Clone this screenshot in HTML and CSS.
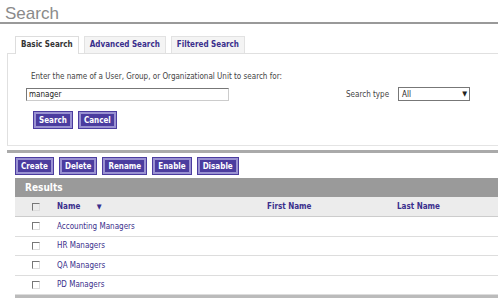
FILE: index.html
```html
<!DOCTYPE html>
<html lang="en">
<head>
    <meta charset="UTF-8">
    <title>Search</title>
    <link rel="stylesheet" href="styles.css">
</head>
<body>
    <div class="page">
        <h1 class="title">Search</h1>
        <div class="tabs">
            <div class="tab active">Basic Search</div>
            <div class="tab">Advanced Search</div>
            <div class="tab">Filtered Search</div>
        </div>
        <div class="panel">
            <div class="hint">Enter the name of a User, Group, or Organizational Unit to search for:</div>
            <div class="row">
                <input class="query" type="text" value="manager">
                <label class="type-label">Search type</label>
                <div class="select"><span>All</span><span class="arrow">&#9660;</span></div>
            </div>
            <div class="actions">
                <button class="btn">Search</button>
                <button class="btn">Cancel</button>
            </div>
        </div>
        <div class="divider"></div>
        <div class="toolbar">
            <button class="btn">Create</button>
            <button class="btn">Delete</button>
            <button class="btn">Rename</button>
            <button class="btn">Enable</button>
            <button class="btn">Disable</button>
        </div>
        <div class="results">
            <div class="results-bar">Results</div>
            <table class="grid">
                <tr class="head">
                    <td class="check"><span class="box"></span></td>
                    <td class="name">Name <span class="sort">&#9660;</span></td>
                    <td class="first">First Name</td>
                    <td class="last">Last Name</td>
                </tr>
                <tr>
                    <td class="check"><span class="box"></span></td>
                    <td class="name">Accounting Managers</td>
                    <td></td>
                    <td></td>
                </tr>
                <tr>
                    <td class="check"><span class="box"></span></td>
                    <td class="name">HR Managers</td>
                    <td></td>
                    <td></td>
                </tr>
                <tr>
                    <td class="check"><span class="box"></span></td>
                    <td class="name">QA Managers</td>
                    <td></td>
                    <td></td>
                </tr>
                <tr>
                    <td class="check"><span class="box"></span></td>
                    <td class="name">PD Managers</td>
                    <td></td>
                    <td></td>
                </tr>
            </table>
        </div>
    </div>
</body>
</html>
```

FILE: styles.css
```css
* {
    margin: 0;
    padding: 0;
    box-sizing: border-box;
}
body {
    background: #fff;
    font-family: "DejaVu Sans Condensed", "DejaVu Sans", sans-serif;
    font-size: 8px;
    color: #333;
    overflow: hidden;
}
.page {
    width: 498px;
}
.title {
    font-family: "Liberation Sans", Arial, sans-serif;
    font-weight: normal;
    font-size: 17px;
    color: #8a8a8a;
    padding: 4px 0 0 5px;
    height: 24px;
    border-bottom: 2px solid #999;
}
.tabs {
    display: flex;
    gap: 5px;
    padding: 12px 0 0 15px;
}
.tab {
    height: 17px;
    line-height: 16px;
    padding: 0 5px;
    font-weight: bold;
    color: #3a2f8c;
    background: #f4f4f4;
    border: 1px solid #e2e2e2;
    border-bottom: none;
}
.tab.active {
    color: #333;
    background: #fff;
    border-color: #ddd;
    height: 18px;
    margin-bottom: -1px;
    position: relative;
}
.panel {
    margin-left: 7px;
    border-left: 1px solid #e0e0e0;
    border-top: 1px solid #e0e0e0;
    border-bottom: 1px solid #e4e4e4;
    padding: 18px 0 17px 18px;
}
.hint {
    color: #444;
    padding-left: 5px;
    height: 10px;
}
.row {
    display: flex;
    align-items: center;
    margin-top: 5px;
}
.query {
    width: 203px;
    height: 13px;
    border: 1px solid #777;
    border-bottom-color: #ccc;
    border-right-color: #ccc;
    font-family: inherit;
    font-size: 8px;
    padding: 0 2px;
    color: #222;
}
.type-label {
    margin-left: 117px;
    margin-right: 9px;
    color: #444;
}
.select {
    width: 72px;
    height: 14px;
    border: 1px solid #777;
    display: flex;
    justify-content: space-between;
    align-items: center;
    padding: 0 2px 0 3px;
    color: #222;
}
.arrow {
    font-size: 7px;
}
.actions {
    display: flex;
    gap: 7px;
    margin: 11px 0 0 8px;
}
.btn {
    font-family: inherit;
    font-size: 8px;
    font-weight: bold;
    color: #fff;
    background: #4b3c9f;
    border: 2px solid #9a92d2;
    outline: 1px solid #4b3c9f;
    height: 16px;
    padding: 0 3px;
    cursor: pointer;
}
.divider {
    margin: 4px 0 0 7px;
    height: 3px;
    background: #aaa;
}
.toolbar {
    display: flex;
    gap: 7px;
    padding: 5px 0 0 16px;
}
.results {
    margin: 4px 0 0 15px;
    border-bottom: 3px solid #bbb;
}
.results-bar {
    background: #9a9a9a;
    color: #fff;
    font-weight: bold;
    font-size: 10px;
    height: 19px;
    line-height: 19px;
    padding-left: 10px;
}
.grid {
    width: 100%;
    border-collapse: collapse;
}
.grid td {
    height: 19.5px;
    border-bottom: 1px solid #ddd;
    padding: 0;
}
.grid .head td {
    background: #ececec;
    font-weight: bold;
    color: #3a2f8c;
    border-bottom: 1px solid #ccc;
}
.check {
    width: 42px;
    text-align: center;
}
.box {
    display: inline-block;
    width: 8px;
    height: 8px;
    border: 1px solid #777;
    border-right-color: #ddd;
    border-bottom-color: #ddd;
    vertical-align: middle;
}
.name {
    width: 210px;
    color: #3a2f8c;
}
.sort {
    font-size: 7px;
    margin-left: 14px;
}
.first {
    width: 130px;
}
```
